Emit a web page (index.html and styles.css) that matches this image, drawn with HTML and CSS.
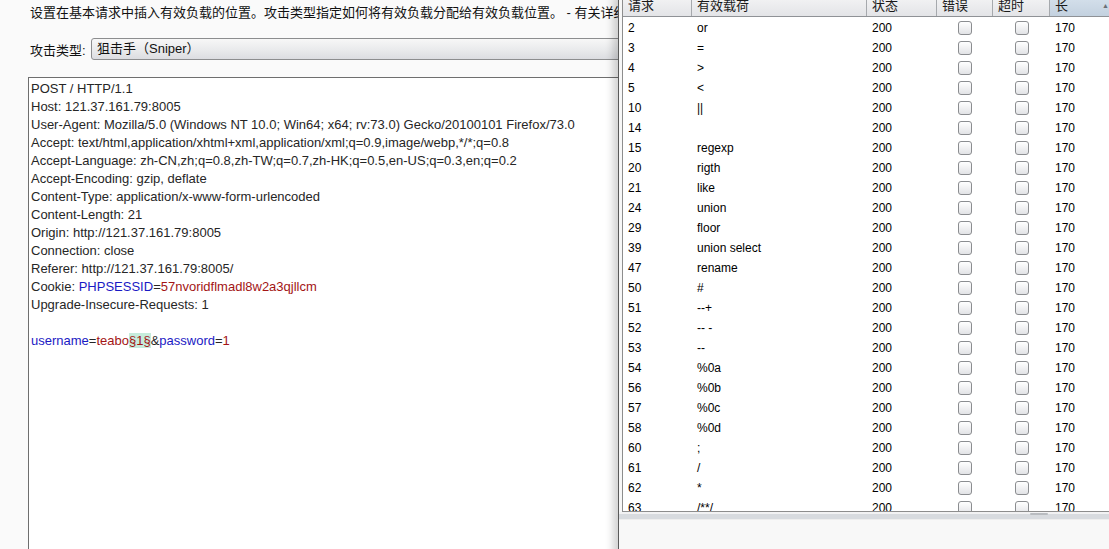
FILE: index.html
```html
<!DOCTYPE html>
<html lang="zh">
<head>
<meta charset="utf-8">
<title>Intruder Positions</title>
<link rel="stylesheet" href="styles.css">
</head>
<body>
<div class="page">
  <div class="desc">设置在基本请求中插入有效负载的位置。攻击类型指定如何将有效负载分配给有效负载位置。 - 有关详细信息，请参阅帮助。</div>
  <div class="attack-row">
    <span class="attack-label">攻击类型:</span>
    <div class="select">狙击手（Sniper）</div>
  </div>
  <div class="editor">
    <div class="line">POST / HTTP/1.1</div>
    <div class="line">Host: 121.37.161.79:8005</div>
    <div class="line">User-Agent: Mozilla/5.0 (Windows NT 10.0; Win64; x64; rv:73.0) Gecko/20100101 Firefox/73.0</div>
    <div class="line">Accept: text/html,application/xhtml+xml,application/xml;q=0.9,image/webp,*/*;q=0.8</div>
    <div class="line">Accept-Language: zh-CN,zh;q=0.8,zh-TW;q=0.7,zh-HK;q=0.5,en-US;q=0.3,en;q=0.2</div>
    <div class="line">Accept-Encoding: gzip, deflate</div>
    <div class="line">Content-Type: application/x-www-form-urlencoded</div>
    <div class="line">Content-Length: 21</div>
    <div class="line">Origin: http://121.37.161.79:8005</div>
    <div class="line">Connection: close</div>
    <div class="line">Referer: http://121.37.161.79:8005/</div>
    <div class="line">Cookie: <span class="k">PHPSESSID</span>=<span class="v">57nvoridflmadl8w2a3qjllcm</span></div>
    <div class="line">Upgrade-Insecure-Requests: 1</div>
    <div class="line"></div>
    <div class="line"><span class="k">username</span>=<span class="v">teabo</span><span class="v mark">§1§</span>&amp;<span class="k">password</span>=<span class="v">1</span></div>
  </div>
</div>

<div class="window">
  <div class="tablewrap">
    <div class="thead">
      <div class="th">请求</div>
      <div class="th">有效载荷</div>
      <div class="th">状态</div>
      <div class="th">错误</div>
      <div class="th">超时</div>
      <div class="th sorted">长<span class="arrow">▲</span></div>
    </div>
    <div class="tbody">
      <div class="tr"><div class="td">2</div><div class="td">or</div><div class="td">200</div><div class="td cb"><span class="box"></span></div><div class="td cb"><span class="box"></span></div><div class="td">170</div></div>
      <div class="tr"><div class="td">3</div><div class="td">=</div><div class="td">200</div><div class="td cb"><span class="box"></span></div><div class="td cb"><span class="box"></span></div><div class="td">170</div></div>
      <div class="tr"><div class="td">4</div><div class="td">&gt;</div><div class="td">200</div><div class="td cb"><span class="box"></span></div><div class="td cb"><span class="box"></span></div><div class="td">170</div></div>
      <div class="tr"><div class="td">5</div><div class="td">&lt;</div><div class="td">200</div><div class="td cb"><span class="box"></span></div><div class="td cb"><span class="box"></span></div><div class="td">170</div></div>
      <div class="tr"><div class="td">10</div><div class="td">||</div><div class="td">200</div><div class="td cb"><span class="box"></span></div><div class="td cb"><span class="box"></span></div><div class="td">170</div></div>
      <div class="tr"><div class="td">14</div><div class="td"></div><div class="td">200</div><div class="td cb"><span class="box"></span></div><div class="td cb"><span class="box"></span></div><div class="td">170</div></div>
      <div class="tr"><div class="td">15</div><div class="td">regexp</div><div class="td">200</div><div class="td cb"><span class="box"></span></div><div class="td cb"><span class="box"></span></div><div class="td">170</div></div>
      <div class="tr"><div class="td">20</div><div class="td">rigth</div><div class="td">200</div><div class="td cb"><span class="box"></span></div><div class="td cb"><span class="box"></span></div><div class="td">170</div></div>
      <div class="tr"><div class="td">21</div><div class="td">like</div><div class="td">200</div><div class="td cb"><span class="box"></span></div><div class="td cb"><span class="box"></span></div><div class="td">170</div></div>
      <div class="tr"><div class="td">24</div><div class="td">union</div><div class="td">200</div><div class="td cb"><span class="box"></span></div><div class="td cb"><span class="box"></span></div><div class="td">170</div></div>
      <div class="tr"><div class="td">29</div><div class="td">floor</div><div class="td">200</div><div class="td cb"><span class="box"></span></div><div class="td cb"><span class="box"></span></div><div class="td">170</div></div>
      <div class="tr"><div class="td">39</div><div class="td">union select</div><div class="td">200</div><div class="td cb"><span class="box"></span></div><div class="td cb"><span class="box"></span></div><div class="td">170</div></div>
      <div class="tr"><div class="td">47</div><div class="td">rename</div><div class="td">200</div><div class="td cb"><span class="box"></span></div><div class="td cb"><span class="box"></span></div><div class="td">170</div></div>
      <div class="tr"><div class="td">50</div><div class="td">#</div><div class="td">200</div><div class="td cb"><span class="box"></span></div><div class="td cb"><span class="box"></span></div><div class="td">170</div></div>
      <div class="tr"><div class="td">51</div><div class="td">--+</div><div class="td">200</div><div class="td cb"><span class="box"></span></div><div class="td cb"><span class="box"></span></div><div class="td">170</div></div>
      <div class="tr"><div class="td">52</div><div class="td">-- -</div><div class="td">200</div><div class="td cb"><span class="box"></span></div><div class="td cb"><span class="box"></span></div><div class="td">170</div></div>
      <div class="tr"><div class="td">53</div><div class="td">--</div><div class="td">200</div><div class="td cb"><span class="box"></span></div><div class="td cb"><span class="box"></span></div><div class="td">170</div></div>
      <div class="tr"><div class="td">54</div><div class="td">%0a</div><div class="td">200</div><div class="td cb"><span class="box"></span></div><div class="td cb"><span class="box"></span></div><div class="td">170</div></div>
      <div class="tr"><div class="td">56</div><div class="td">%0b</div><div class="td">200</div><div class="td cb"><span class="box"></span></div><div class="td cb"><span class="box"></span></div><div class="td">170</div></div>
      <div class="tr"><div class="td">57</div><div class="td">%0c</div><div class="td">200</div><div class="td cb"><span class="box"></span></div><div class="td cb"><span class="box"></span></div><div class="td">170</div></div>
      <div class="tr"><div class="td">58</div><div class="td">%0d</div><div class="td">200</div><div class="td cb"><span class="box"></span></div><div class="td cb"><span class="box"></span></div><div class="td">170</div></div>
      <div class="tr"><div class="td">60</div><div class="td">;</div><div class="td">200</div><div class="td cb"><span class="box"></span></div><div class="td cb"><span class="box"></span></div><div class="td">170</div></div>
      <div class="tr"><div class="td">61</div><div class="td">/</div><div class="td">200</div><div class="td cb"><span class="box"></span></div><div class="td cb"><span class="box"></span></div><div class="td">170</div></div>
      <div class="tr"><div class="td">62</div><div class="td">*</div><div class="td">200</div><div class="td cb"><span class="box"></span></div><div class="td cb"><span class="box"></span></div><div class="td">170</div></div>
      <div class="tr"><div class="td">63</div><div class="td">/**/</div><div class="td">200</div><div class="td cb"><span class="box"></span></div><div class="td cb"><span class="box"></span></div><div class="td">170</div></div>
    </div>
  </div>
  <div class="splitter"><span class="grip"></span></div>
  <div class="bottom-pane"></div>
</div>
</body>
</html>
```

FILE: styles.css
```css
html, body {
  margin: 0;
  padding: 0;
}
body {
  width: 1109px;
  height: 549px;
  overflow: hidden;
  position: relative;
  background: #fafafa;
  font-family: "Liberation Sans", Arial, "Noto Sans CJK SC", sans-serif;
  color: #1e1e1e;
}
.page {
  display: flex;
  flex-direction: column;
  height: 549px;
}
.desc {
  height: 26px;
  line-height: 26px;
  padding-left: 30px;
  font-size: 13px;
  white-space: nowrap;
  color: #111;
}
.attack-row {
  display: flex;
  align-items: center;
  margin-top: 12px;
  height: 22px;
  padding-left: 30px;
}
.attack-label {
  font-size: 13px;
  width: 61px;
  color: #111;
}
.select {
  box-sizing: border-box;
  width: 700px;
  height: 22px;
  line-height: 20px;
  border: 1px solid #8c8d8f;
  border-radius: 3px;
  padding-left: 5px;
  font-size: 13px;
  color: #111;
  background: linear-gradient(#f7f7f7, #e9eaec 55%, #dcdde1);
}
.editor {
  margin-top: 17px;
  margin-left: 28px;
  width: 640px;
  flex: 1;
  background: #fff;
  border: 1px solid #6e6e6e;
  border-bottom: none;
  padding: 2px 0 0 2px;
  font-size: 13px;
}
.line {
  height: 18px;
  line-height: 18px;
  white-space: nowrap;
  color: #262626;
}
.k { color: #1a1ac4; }
.v { color: #a31515; }
.mark { background: #c6ecdc; }

/* overlay results window */
.window {
  position: absolute;
  left: 618px;
  top: -5px;
  width: 520px;
  height: 570px;
  background: #f7f7f7;
  border-left: 1px solid #5a5a5a;
  box-shadow: -5px 0 8px rgba(0, 0, 0, 0.18);
  display: flex;
  flex-direction: column;
}
.tablewrap {
  box-sizing: border-box;
  margin-left: 3px;
  height: 517px;
  border: 1px solid #8d8d8d;
  background: #fff;
  overflow: hidden;
}
.thead {
  display: grid;
  grid-template-columns: 69px 175px 70px 56px 57px 1fr;
  height: 20px;
  border-bottom: 1px solid #8f9296;
}
.th {
  box-sizing: border-box;
  border-right: 1px solid #a6a9ad;
  background: linear-gradient(#f4f4f5, #e3e4e7);
  font-size: 13px;
  line-height: 20px;
  padding-left: 5px;
  color: #1a1a1a;
  position: relative;
}
.th.sorted {
  background: linear-gradient(#d6e1ec, #c3d1df);
  border-right: none;
}
.arrow {
  position: absolute;
  left: 52px;
  top: 0;
  font-size: 7px;
  color: #6a6f75;
}
.tbody {
  padding-top: 1px;
}
.tr {
  display: grid;
  grid-template-columns: 69px 175px 70px 56px 57px 1fr;
  height: 20px;
}
.td {
  font-size: 12px;
  line-height: 20px;
  padding-left: 5px;
  color: #000;
  white-space: nowrap;
}
.td.cb {
  padding-left: 0;
  display: flex;
  align-items: center;
  justify-content: center;
}
.box {
  box-sizing: border-box;
  width: 14px;
  height: 14px;
  border: 1px solid #8b8d90;
  border-radius: 3px;
  background: linear-gradient(#ffffff, #e2e3e6);
}
.splitter {
  height: 8px;
  position: relative;
  background: linear-gradient(#f2f2f3 0, #f2f2f3 2px, #d8dbdf 2px, #d8dbdf 7px, #eeeeee 7px);
}
.grip {
  position: absolute;
  left: 411px;
  top: 1px;
  width: 18px;
  height: 2px;
  background: #b9bcc0;
  border-radius: 1px;
}
.bottom-pane {
  flex: 1;
  background: #f8f8f8;
}
```
